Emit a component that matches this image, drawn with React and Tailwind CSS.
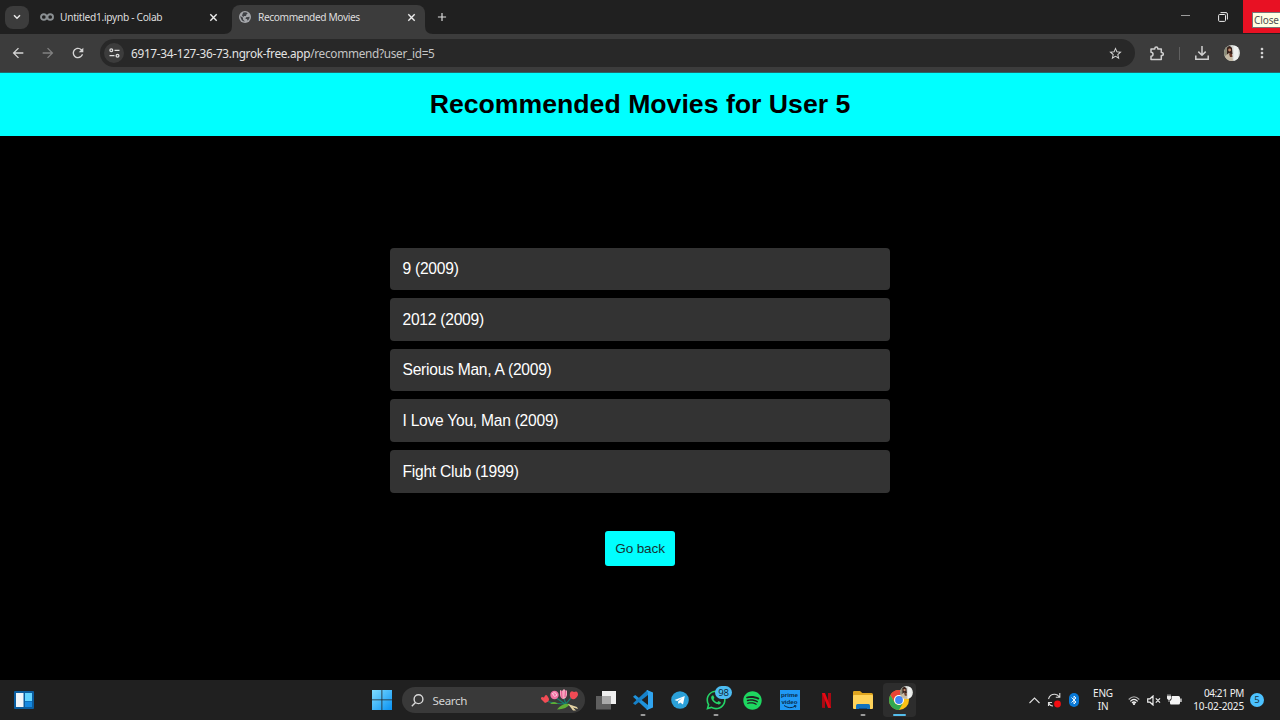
import React from "react";
import { MdArrowBack, MdArrowForward, MdRefresh, MdStarBorder, MdMoreVert, MdAdd } from "react-icons/md";
import { FaSpotify, FaWhatsapp } from "react-icons/fa";

const movies = ["9 (2009)", "2012 (2009)", "Serious Man, A (2009)", "I Love You, Man (2009)", "Fight Club (1999)"];

function Avatar({ size }) {
  return (
    <svg width={size} height={size} viewBox="0 0 16 16">
      <defs>
        <clipPath id={"av" + size}><circle cx="8" cy="8" r="8" /></clipPath>
      </defs>
      <g clipPath={"url(#av" + size + ")"}>
        <rect width="16" height="16" fill="#d3d6d2" />
        <rect width="4" height="16" fill="#8a8b78" />
        <path d="M3 3Q5-1 8 3L8.5 9L3 10Z" fill="#38211b" />
        <circle cx="5.6" cy="5" r="1.4" fill="#c48a6b" />
        <path d="M1 11L5 8L8 10L9 16H1Z" fill="#c5bba6" />
        <path d="M5 8.5L8 9L8.5 12L6 12Z" fill="#6b3b2a" />
        <rect x="9.5" y="1" width="5" height="15" fill="#eff1f0" />
      </g>
    </svg>
  );
}

function CloseIcon() {
  return (
    <svg className="shrink-0" width="11" height="11" viewBox="0 0 11 11" fill="none" stroke="#ececec" strokeWidth="1.4">
      <path d="M2.3 2.3L8.7 8.7M8.7 2.3L2.3 8.7" />
    </svg>
  );
}

function TabStrip() {
  return (
    <div className="flex h-[34px] bg-[#202020] text-[#dedede]">
      <div className="flex w-[34px] shrink-0 items-center pl-[5px]">
        <div className="flex h-[23px] w-[24px] items-center justify-center rounded-[8px] bg-[#3c3c3c]">
          <svg width="8" height="6" viewBox="0 0 8 6" fill="none" stroke="#e8e8e8" strokeWidth="1.5"><path d="M1 1.3L4 4.3L7 1.3" /></svg>
        </div>
      </div>
      <div className="flex w-[189px] shrink-0 items-center pl-[6px]">
        <svg width="14" height="10" viewBox="0 0 14 10" fill="none" stroke="#8b9093" strokeWidth="1.9">
          <circle cx="3.8" cy="5" r="2.8" />
          <circle cx="10.2" cy="5" r="2.8" />
        </svg>
        <span className="ml-[6px] w-[148px] pt-px text-[10.2px] tracking-[-0.3px] whitespace-nowrap">Untitled1.ipynb - Colab</span>
        <CloseIcon />
      </div>
      <svg className="mt-[26px] ml-[1px] shrink-0" width="8" height="8" viewBox="0 0 8 8"><path d="M8 0Q8 8 0 8H8Z" fill="#3c3c3c" /></svg>
      <div className="mt-[5px] flex h-[29px] w-[193px] shrink-0 items-center rounded-t-[8px] bg-[#3c3c3c] pb-[5px] pl-[7px]">
        <svg width="12" height="12" viewBox="0 0 12 12">
          <circle cx="6" cy="6" r="6" fill="#a4a6aa" />
          <path d="M1.2 5L4 6.8V8.5L6 10.6Q2 10.5 1.2 5ZM4.2 1.6Q7 .7 8.8 2.3L7.6 3.2L7 5H5.2L4.2 6L3 4.5ZM7 6.2L9 6L10.7 5.8Q10.5 8.7 8.6 9.8L8 8H6.5Z" fill="#3f4145" />
        </svg>
        <span className="ml-[7px] w-[148px] pt-px text-[10.2px] tracking-[-0.39px] whitespace-nowrap">Recommended Movies</span>
        <CloseIcon />
      </div>
      <svg className="mt-[26px] shrink-0" width="8" height="8" viewBox="0 0 8 8"><path d="M0 0Q0 8 8 8H0Z" fill="#3c3c3c" /></svg>
      <div className="flex w-[18px] items-center justify-center"><MdAdd size={14} className="shrink-0" /></div>
      <div className="ml-auto flex">
        <div className="flex w-[35px] items-center justify-center pb-[3px]"><div className="h-px w-[9px] bg-[#9c9c9c]" /></div>
        <div className="flex w-[40px] items-center justify-center">
          <svg width="10" height="10" viewBox="0 0 10 10" fill="none" stroke="#ececec"><rect x=".6" y="2.5" width="6.9" height="6.9" rx="1" /><path d="M2.5 .6H8Q9.4 .6 9.4 2V7.5" /></svg>
        </div>
        <div className="h-[33px] w-[37px] overflow-hidden bg-[#e81123] pt-[12px] pl-[9px]">
          <div className="h-[16px] w-[32px] border border-[#777] bg-[#ffffe4] pl-[1px] text-[10px] leading-[15px] tracking-[-0.1px] text-[#505050]">Close</div>
        </div>
      </div>
    </div>
  );
}

function Toolbar() {
  return (
    <div className="flex h-[39px] items-center border-b border-[#24686a] bg-[#3c3c3c] text-[#d5d5d5]">
      <div className="flex w-[36px] shrink-0 justify-center"><MdArrowBack size={16} /></div>
      <div className="flex w-[24px] shrink-0 justify-center text-[#818181]"><MdArrowForward size={16} /></div>
      <div className="flex w-[36px] shrink-0 justify-center"><MdRefresh size={16} /></div>
      <div className="ml-[4px] flex h-[28px] w-[1035px] shrink-0 items-center rounded-full bg-[#282828] pl-[4px]">
        <div className="flex h-[20px] w-[20px] items-center justify-center rounded-full bg-[#3c3c3c]">
          <svg width="11" height="10" viewBox="0 0 11 10" fill="none" stroke="#dedede" strokeWidth="1.3"><circle cx="2.3" cy="2.3" r="1.4" /><path d="M5.5 2.3H10.5M.5 7.7H5.5" /><circle cx="8.5" cy="7.7" r="1.4" /></svg>
        </div>
        <span className="ml-[7px] pt-[2px] text-[11.8px] tracking-[-0.3px] whitespace-nowrap text-[#e3e3e3]">6917-34-127-36-73.ngrok-free.app<span className="text-[#c5c5c5]">/recommend?user_id=5</span></span>
        <MdStarBorder size={15} className="mr-[12px] ml-auto" />
      </div>
      <div className="flex w-[44px] shrink-0 justify-center">
        <svg width="14" height="15" viewBox="0 0 14 15" fill="none" stroke="#d0d0d0" strokeWidth="1.5" strokeLinejoin="round"><path d="M1 3H4.8V2.4A1.5 1.5 0 0 1 7.8 2.4V3H11.3V6.6H11.8A1.5 1.5 0 0 1 11.8 9.6H11.3V13.5H1V10.3A2 2 0 0 0 1 6.3Z" /></svg>
      </div>
      <div className="h-[13px] w-px shrink-0 bg-[#606060]" />
      <div className="flex w-[44px] shrink-0 justify-center">
        <svg width="14" height="14" viewBox="0 0 14 14" fill="none" stroke="#d0d0d0" strokeWidth="1.5"><path d="M7 0V9M3.3 5.6L7 9.2L10.7 5.6M.8 9.5V13.2H13.2V9.5" /></svg>
      </div>
      <div className="shrink-0"><Avatar size={16} /></div>
      <div className="flex w-[40px] shrink-0 justify-center pl-[4px]"><MdMoreVert size={16} /></div>
    </div>
  );
}

function Slot({ children, dot }) {
  return (
    <div className="relative flex h-[40px] w-[36.65px] shrink-0 items-center justify-center">
      {children}
      {dot && <div className="absolute bottom-[4px] left-1/2 h-[2.5px] w-[5px] -translate-x-1/2 rounded-full bg-[#9b9b9b]" />}
    </div>
  );
}

function Flowers() {
  return (
    <svg width="38" height="22" viewBox="0 0 38 22">
      <path d="M5 12Q14 15 25 15M14 8L24 15M22 7L25 15M31 7Q28 13 18 20" stroke="#157f70" strokeWidth="1.2" fill="none" />
      <path d="M16 20.5Q21 14 29 15Q26 20 16 20.5ZM9 15Q13 11 17 15Z" fill="#5fae35" />
      <path d="M27 15L36 18L37 20L32 18.5L35 21.5L32 21.5Z" fill="#e5d3a4" />
      <path d="M4 14L0 10Q-.2 7 3 8.5Q5 4 7 8Q10 12 4 14Z" fill="#f34c55" />
      <circle cx="13.5" cy="6" r="4.2" fill="#f173a4" /><path d="M11 5Q14 2 16 6Q13 9 12 5" fill="none" stroke="#ffd0de" />
      <path d="M19 1L21 2L23 0L25 2L26 1L26 6Q25 10 22 10Q19 9 19 5Z" fill="#f6a3bb" /><path d="M20.5 2L21 9M24.5 2L24 8" stroke="#e3568f" />
      <path d="M29 4Q30 1 33 3Q37 1 37 6Q35 11 31 10Q28 8 29 4Z" fill="#f04b55" />
    </svg>
  );
}

function Taskbar() {
  return (
    <div className="flex h-[40px] items-center bg-[#202020]">
      <div className="w-[363.5px] shrink-0 pl-[14px]">
        <svg width="20" height="18" viewBox="0 0 20 18"><rect width="20" height="18" rx="1" fill="#0b5d9f" /><rect x="2" y="2" width="7.5" height="14" fill="#f1f5f9" /><rect x="11" y="2" width="7" height="8" fill="#63d3ff" /><rect x="11" y="10.5" width="7" height="5.5" fill="#1688df" /></svg>
      </div>
      <Slot>
        <svg width="20" height="20" viewBox="0 0 20 20">
          <defs><linearGradient id="win" x2="1" y2="1"><stop stopColor="#80ddff" /><stop offset="1" stopColor="#0791f3" /></linearGradient></defs>
          <path d="M0 0H9.5V9.5H0ZM10.3 0H20V9.5H10.3ZM0 10.3H9.5V20H0ZM10.3 10.3H20V20H10.3Z" fill="url(#win)" />
        </svg>
      </Slot>
      <div className="ml-[2.35px] flex h-[26px] w-[182.5px] shrink-0 items-center rounded-full bg-[#393939] pl-[9px]">
        <svg width="13" height="13" viewBox="0 0 13 13" fill="none" stroke="#d8d8d8" strokeWidth="1.4"><circle cx="7.5" cy="5.2" r="4.4" /><path d="M4.5 8.5L.8 12.2" /></svg>
        <span className="ml-[8px] pt-[1px] text-[11.6px] tracking-[-0.35px] text-[#d4d4d4]">Search</span>
        <div className="mr-[6px] ml-auto"><Flowers /></div>
      </div>
      <div className="ml-[3px] flex shrink-0">
        <Slot>
          <svg width="20" height="19" viewBox="0 0 20 19"><rect x="6" y="0" width="14" height="13" fill="#efefef" /><rect x="0" y="5" width="15" height="13.5" fill="#5e5e5e" /><path d="M6 5H15V13H6Z" fill="#aaa" /></svg>
        </Slot>
        <Slot dot>
          <svg width="20" height="20" viewBox="0 0 20 20">
            <path d="M0 6.8L2.2 5L15 15V20L13.8 19.5Z" fill="#1f93dc" />
            <path d="M0 13.2L2.2 15L15 5V0L13.8 .5Z" fill="#1680c8" />
            <path d="M14 0L20 2.6V17.4L14 20L13.6 19.5L15 17.5V2.5L13.6 .5Z" fill="#30a4ef" />
          </svg>
        </Slot>
        <Slot>
          <svg width="18" height="18" viewBox="0 0 18 18"><circle cx="9" cy="9" r="8.8" fill="#2ba0d8" /><path d="M3.5 9L13.8 5L12 13.5L9.2 11.5L7.5 13L7 10.5L11.2 6.9L6.2 10Z" fill="white" /></svg>
        </Slot>
        <Slot dot>
          <FaWhatsapp size={22} color="#24d366" />
          <div className="absolute top-[6px] left-[17px] flex h-[13px] w-[17px] items-center justify-center rounded-full bg-[#4cbcf2] text-[9.5px] leading-none tracking-[-0.4px] text-[#102a38]">98</div>
        </Slot>
        <Slot><FaSpotify size={19} color="#1ed760" /></Slot>
        <Slot>
          <div className="flex h-[20px] w-[20px] flex-col items-center bg-[#2099f5] pt-[2px] font-['Liberation_Sans',Arial,sans-serif] text-[6.2px] leading-[6.5px] font-bold text-[#092c4a]">
            <span>prime</span><span>video</span>
            <svg className="shrink-0" width="14" height="4" viewBox="0 0 14 4" fill="none" stroke="#092c4a"><path d="M1 .5Q7 4.5 12 1.2M11 .7H13L12.5 2.5" /></svg>
          </div>
        </Slot>
        <Slot>
          <svg width="9" height="15" viewBox="0 0 9 15"><path d="M0 0H3V15L0 14.7ZM6 0H9V14.7L6 15Z" fill="#aa0912" /><path d="M0 0H3L9 15L6 14.8Z" fill="#e50914" /></svg>
        </Slot>
        <Slot dot>
          <svg width="20" height="19" viewBox="0 0 20 19"><path d="M0 1.2Q0 0 1.2 0H7L9.3 2H18.5Q20 2 20 3.5V6H0Z" fill="#dfa51f" /><path d="M0 5Q0 4 1 4H19Q20 4 20 5V17Q20 18 19 18H1Q0 18 0 17Z" fill="#ffd35a" /><path d="M3 18V14.5Q3 13 4.5 13H15.5Q17 13 17 14.5V18Z" fill="#1273bf" /><path d="M6 18V17H14V18Z" fill="#0b4e8f" /></svg>
        </Slot>
        <div className="relative flex h-[40px] w-[36.65px] items-center justify-center">
          <div className="flex h-[34px] w-[33px] items-center justify-center rounded-[4px] bg-[#2d2d2d]">
            <svg width="20" height="20" viewBox="0 0 20 20">
              <circle cx="10" cy="10" r="10" fill="#fbc116" />
              <path d="M1.34 5A10 10 0 0 1 18.66 5H10A5 5 0 0 0 5.67 12.5Z" fill="#e94435" />
              <path d="M1.34 5A10 10 0 0 0 10 20L14.33 12.5A5 5 0 0 1 5.67 12.5Z" fill="#31a852" />
              <circle cx="10" cy="10" r="5" fill="white" /><circle cx="10" cy="10" r="3.9" fill="#4285f4" />
            </svg>
          </div>
          <div className="absolute top-[6px] left-[19px]"><Avatar size={13} /></div>
          <div className="absolute bottom-[4px] left-[12px] h-[2.5px] w-[13px] rounded-full bg-[#55bdeb]" />
        </div>
      </div>
      <div className="ml-auto flex h-[40px] shrink-0 items-center pr-[16px] text-[#f1f1f1]">
        <svg width="11" height="7" viewBox="0 0 11 7" fill="none" stroke="#ddd" strokeWidth="1.1"><path d="M.5 6L5.5 1L10.5 6" /></svg>
        <svg className="ml-[7px]" width="15" height="16" viewBox="0 0 15 16" fill="none" stroke="#ddd" strokeWidth="1.1"><path d="M1.5 7Q3 2 8 2.3Q10.5 2.5 12.5 5M12.8 1V5.2H8.8M1.5 14V10.5H5M1.5 10.8Q3 14 6 14" /><circle cx="10.5" cy="12" r="3.4" fill="#f30d12" stroke="none" /></svg>
        <svg className="ml-[7px]" width="10" height="14" viewBox="0 0 10 14"><rect width="10" height="14" rx="5" fill="#0878d6" /><path d="M2.5 4.5L7 9L5 11V3L7 5L2.5 9.5" fill="none" stroke="white" strokeWidth=".9" /></svg>
        <div className="ml-[13px] w-[22px] text-center text-[10px] leading-[13.5px] tracking-[-0.2px]">ENG<br />IN</div>
        <svg className="ml-[14px]" width="12" height="11" viewBox="0 0 12 11" fill="none" stroke="#f1f1f1" strokeWidth="1.2"><path d="M.7 4.5Q6-1 11.3 4.5" stroke="#aaa" /><path d="M2.3 6.3Q6 2.3 9.7 6.3M4 8Q6 6 8 8" /><circle cx="6" cy="9" r="1.1" fill="#fff" stroke="none" /></svg>
        <svg className="ml-[7px]" width="14" height="11" viewBox="0 0 14 11" fill="none" stroke="#eee" strokeWidth="1.2"><path d="M.7 3.8H3L6 1V10L3 7.2H.7ZM8.8 3.3L13 7.7M13 3.3L8.8 7.7" /></svg>
        <svg className="ml-[6px]" width="15" height="12" viewBox="0 0 15 12"><path d="M5 2H11.5Q13 2 13 3.5V9Q13 10.5 11.5 10.5H4Q3 10.5 3 9V7Q5 6 5 2ZM13.3 4.5H14.6V8H13.3Z" fill="#f4f4f4" /><path d="M1 .3V3M3 .3V3M0 2.3H4V4Q3.5 5.5 2 5.5Q.5 5.5 0 4ZM2 5V8" fill="#eee" stroke="#eee" strokeWidth=".8" /></svg>
        <div className="ml-[7px] w-[55px] text-right text-[10px] leading-[13.5px] whitespace-nowrap"><div className="tracking-[-0.4px]">04:21 PM</div><div className="flex justify-end tracking-[-0.15px]">10-02-2025</div></div>
        <div className="ml-[6px] flex h-[14px] w-[14px] items-center justify-center rounded-full bg-[#4cc2ff] text-[9.5px] leading-none text-[#153545]">5</div>
      </div>
    </div>
  );
}

export default function App() {
  return (
    <div className="flex h-[720px] w-[1280px] flex-col overflow-hidden bg-black font-['Noto_Sans',sans-serif]">
      <TabStrip />
      <Toolbar />
      <main className="flex flex-1 flex-col items-center font-['Liberation_Sans',Arial,sans-serif]">
        <h1 className="flex h-[63px] w-full items-center justify-center bg-[#00ffff] pb-[2px] text-[26.67px] font-bold text-black">Recommended Movies for User 5</h1>
        <ul className="mt-[111.5px] flex w-[500px] flex-col gap-[8px]">
          {movies.map((m) => (
            <li key={m} className="flex h-[42.65px] items-center rounded-[4px] bg-[#333] pl-[12.5px] text-[15.6px] tracking-[-0.25px] text-white">{m}</li>
          ))}
        </ul>
        <button className="mt-[38px] h-[35px] w-[70px] rounded-[3px] bg-[#00ffff] pt-px text-[13.6px] tracking-[-0.15px] text-[#163333]">Go back</button>
      </main>
      <Taskbar />
    </div>
  );
}
